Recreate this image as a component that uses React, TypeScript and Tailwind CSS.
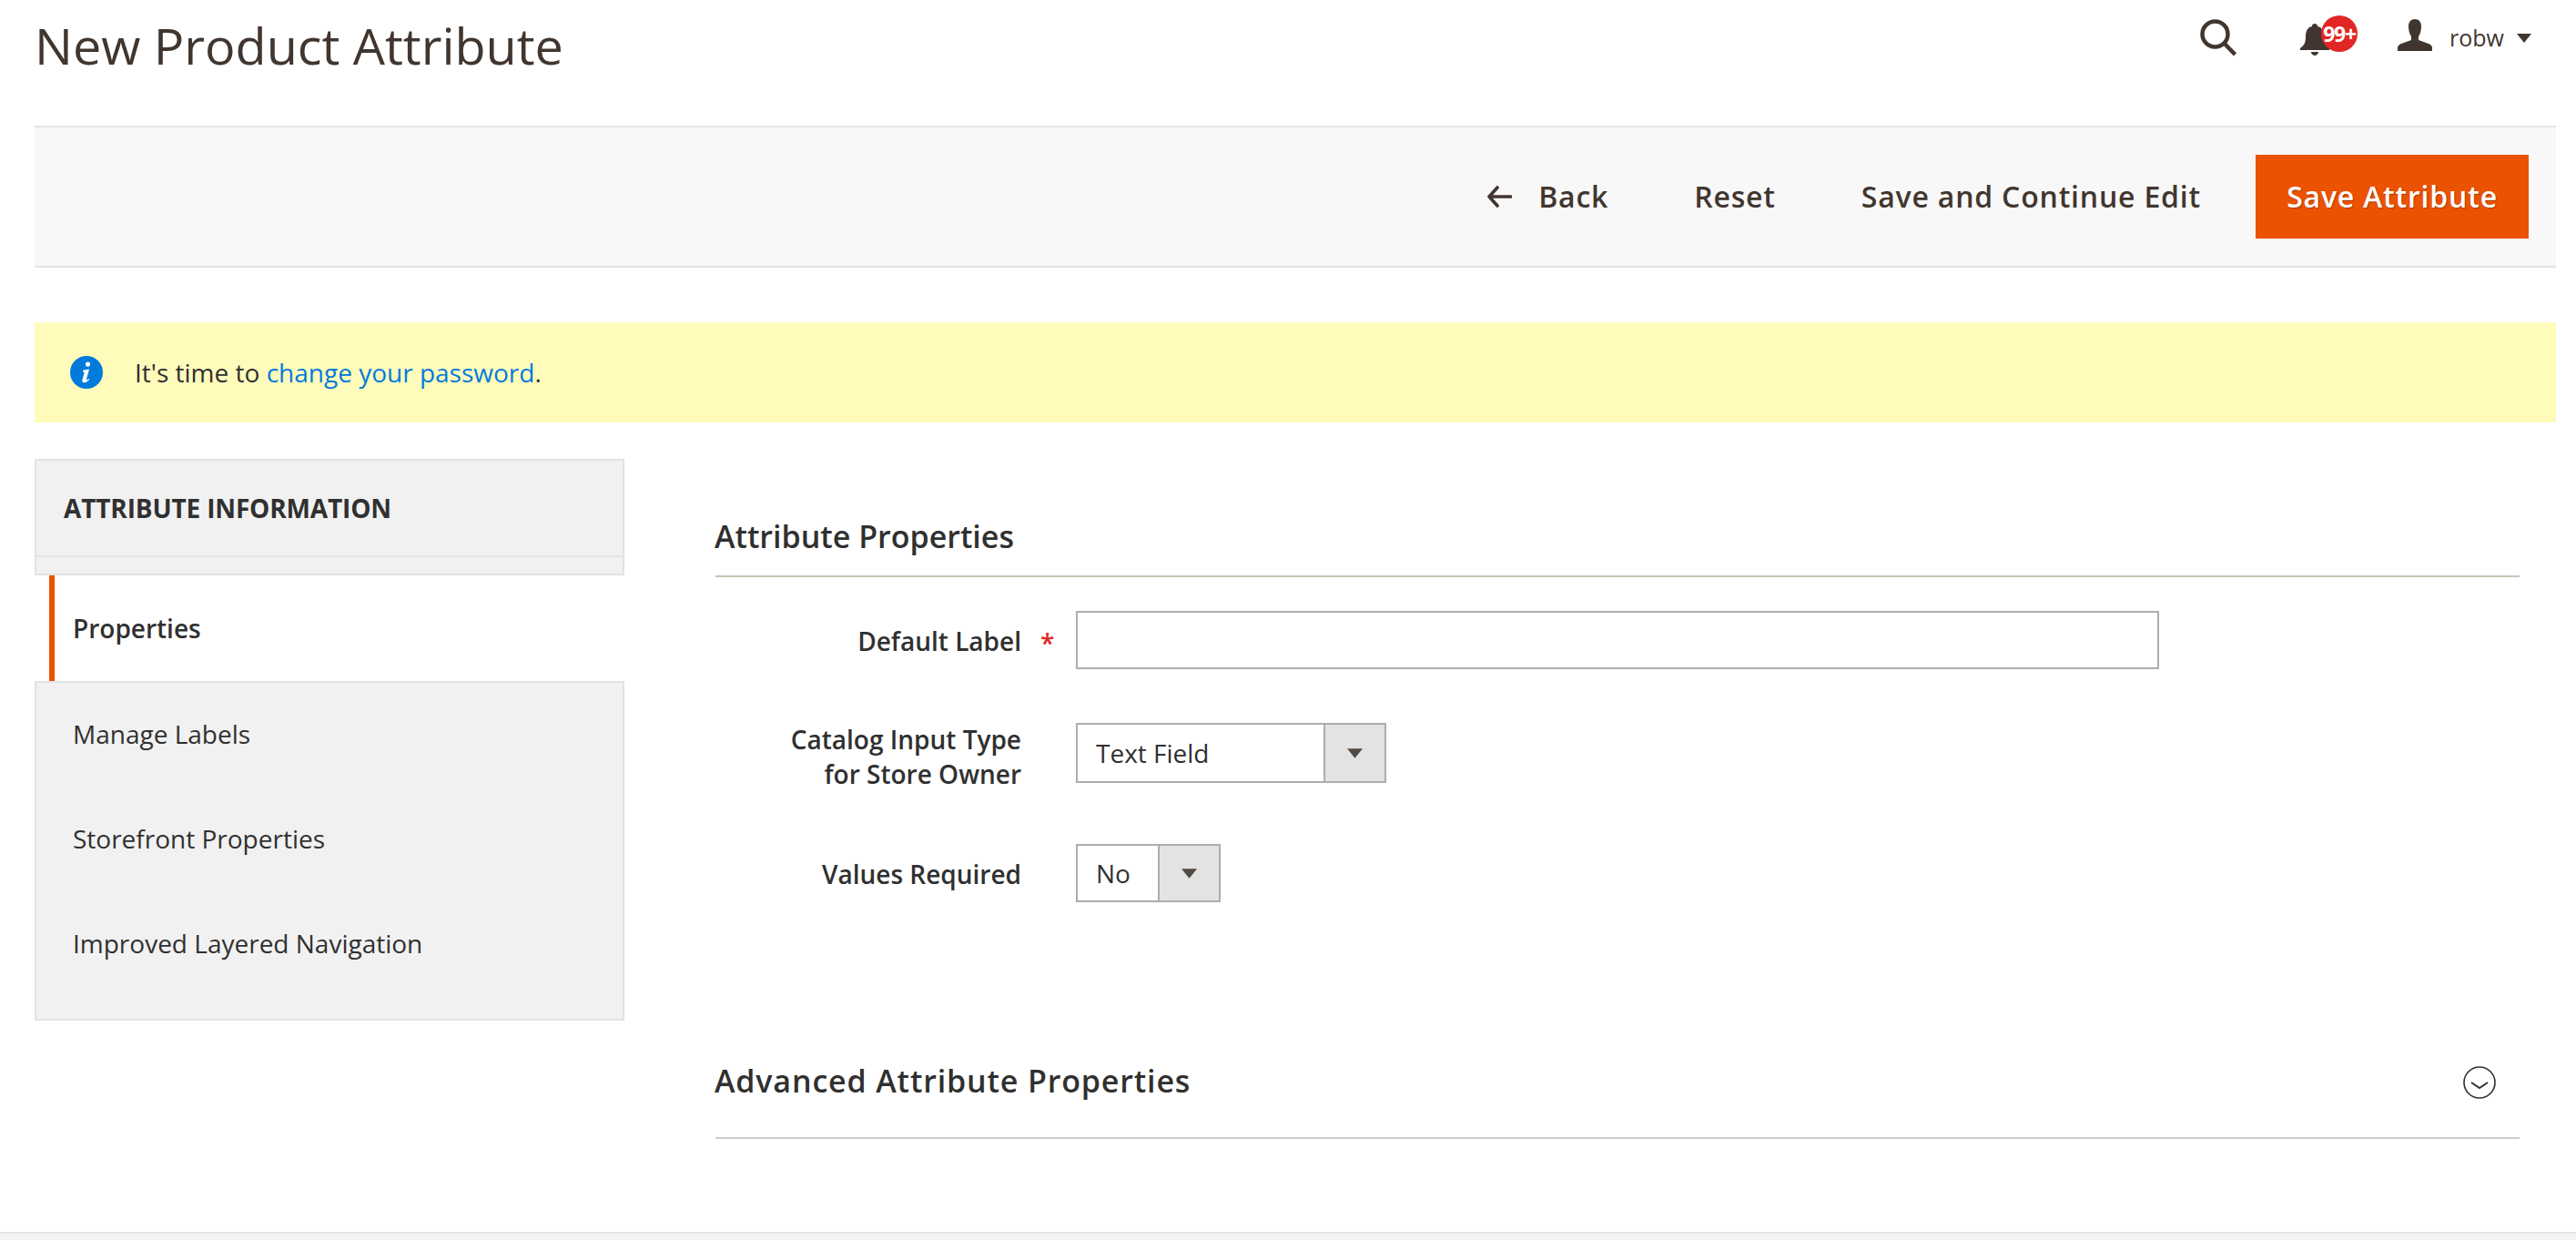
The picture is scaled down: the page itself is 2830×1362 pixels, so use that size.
import React from "react";

function Caret({ className }: { className: string }) {
  return (
    <svg viewBox="0 0 16 10" className={className} fill="currentColor">
      <path d="M0 0H16L8 10Z" />
    </svg>
  );
}

function SelectBox({ value, textW, h }: { value: string; textW: string; h: string }) {
  return (
    <div className={`flex ${h} border-2 border-[#adadad] bg-white`}>
      <div className={`${textW} pl-[20px] flex items-center text-[28px] text-[#303030]`}>{value}</div>
      <div className="w-[67px] bg-[#e3e3e3] border-l-2 border-[#adadad] flex items-center justify-center text-[#514943]">
        <Caret className="w-[17px] h-[15px]" />
      </div>
    </div>
  );
}

export default function App() {
  return (
    <div className="h-[1362px] w-full overflow-hidden bg-white flex flex-col font-['Open_Sans',sans-serif] text-[#303030]">
      <div className="flex-1 px-[38px] pr-[22px]">
        {/* Header */}
        <header className="h-[138px] flex justify-between items-start">
          <h1 className="text-[55.7px] font-normal leading-[76px] text-[#41362f] mt-[11px]">New Product Attribute</h1>
          <div className="flex items-start text-[#41362f] pr-[27px]">
            <svg viewBox="0 0 40 41" className="w-[40px] h-[41px] mt-[21px] mr-[70px]">
              <circle cx="16.5" cy="16.5" r="14" fill="none" stroke="#41362f" strokeWidth="4.5" />
              <path d="M26 26L38.5 39" stroke="#41362f" strokeWidth="4.5" />
            </svg>
            <div className="relative w-[62px] h-[60px] mr-[45px]">
              <svg viewBox="0 0 32 36" className="absolute left-0 top-[26px] w-[32px] h-[36px]">
                <path d="M16 0c2 0 3 1 3 3 6 1 7 7 7 12 0 6 2 9 6 12v2H0v-2c4-3 6-6 6-12 0-5 1-11 7-12 0-2 1-3 3-3z" fill="#41362f" />
                <path d="M12 31h8c0 2-2 4-4 4s-4-2-4-4z" fill="#41362f" />
              </svg>
              <span className="absolute left-[23px] top-[17px] w-[40px] h-[40px] rounded-full bg-[#e22626] text-white text-[23px] font-bold tracking-[-1.2px] flex items-center justify-center">99+</span>
            </div>
            <svg viewBox="0 0 38 35" className="w-[38px] h-[35px] mt-[21px] mr-[19px]">
              <path d="M19 0c4.500 0 7 3 7 8 0 5-1.500 9-3 11v4l11 4c2.500 1 4 2.500 4 4.500V35H0v-3.500C0 29.500 1.500 28 4 27l11-4v-4c-1.500-2-3-6-3-11 0-5 2.500-8 7-8z" fill="#41362f" />
            </svg>
            <span className="text-[25px] leading-[38px] mt-[22px] mr-[14px]">robw</span>
            <Caret className="w-[16px] h-[10px] mt-[37px]" />
          </div>
        </header>

        {/* Action bar */}
        <div className="h-[156px] bg-[#f8f8f8] border-y-2 border-[#e3e3e3] flex items-center justify-end pr-[30px] pb-[1px] text-[#41362f] text-[32px] font-semibold tracking-[0.8px]">
          <svg viewBox="0 0 28 24" className="w-[28px] h-[24px] mr-[29px]">
            <path d="M12 2L3 12L12 22M3 12H27" fill="none" stroke="#41362f" strokeWidth="3.6" strokeLinecap="round" strokeLinejoin="round" />
          </svg>
          <span>Back</span>
          <span className="ml-[94px]">Reset</span>
          <span className="ml-[94px]">Save and Continue Edit</span>
          <button className="ml-[60px] w-[300px] h-[92px] bg-[#eb5202] text-white [text-shadow:1px_1px_1px_rgba(0,0,0,0.3)] font-semibold">Save Attribute</button>
        </div>

        {/* Notice */}
        <div className="mt-[60px] h-[110px] bg-[#fffbbb] flex items-center pl-[39px] text-[28px]">
          <svg viewBox="0 0 36 36" className="w-[36px] h-[36px] mr-[35px]">
            <circle cx="18" cy="18" r="18" fill="#007bdb" />
            <path d="M19.5 6.5a2.6 2.6 0 1 1 0 5.2 2.6 2.6 0 0 1 0-5.2zM14.5 15.5l6.5-1-3 11c-.2 1 .6 1.1 2.6-.6l.8.9c-2.4 2.6-4.5 3.7-6.3 3.5-1.7-.2-2.1-1.4-1.6-3.1l2.2-8.3-1.7-.3z" fill="#fff" />
          </svg>
          <span>It's time to <a className="text-[#007bdb]">change your password</a>.</span>
        </div>

        {/* Content */}
        <div className="mt-[40px] flex items-start">
          <aside className="w-[648px] shrink-0 text-[28px]">
            <div className="h-[108px] bg-[#f1f1f1] border-2 border-[#e3e3e3] flex items-center pl-[30px] font-bold uppercase text-[28px] tracking-[-0.15px]">Attribute Information</div>
            <div className="h-[20px] bg-[#f1f1f1] border-x-2 border-b-2 border-[#e3e3e3]" />
            <div className="h-[116px] ml-[16px] bg-white border-l-[6px] border-[#eb5202] flex items-center pl-[20px] font-semibold">Properties</div>
            <div className="bg-[#f1f1f1] border-2 border-[#e3e3e3] pb-[26px]">
              <div className="h-[115px] -mt-[2px] flex items-center pl-[40px]">Manage Labels</div>
              <div className="h-[115px] flex items-center pl-[40px]">Storefront Properties</div>
              <div className="h-[115px] flex items-center pl-[40px]">Improved Layered Navigation</div>
            </div>
          </aside>

          <main className="ml-[100px] flex-1 mr-[40px]">
            <div className="h-[130px] border-b-2 border-[#cac3b4] flex items-center pt-[42px] text-[#303030]">
              <h2 className="text-[34px] font-semibold -ml-[1px]">Attribute Properties</h2>
            </div>
            <div className="mt-[37px] flex items-center h-[64px]">
              <label className="relative w-[336px] text-right font-semibold text-[28px] pt-[2px]">
                Default Label
                <span className="absolute left-[357px] top-[4px] text-[#e22626]">*</span>
              </label>
              <input className="ml-[60px] w-[1190px] h-[64px] border-2 border-[#adadad] bg-white" />
            </div>
            <div className="mt-[59px] flex items-center h-[66px]">
              <label className="w-[336px] text-right font-semibold text-[28px] leading-[38px] pt-[8px]">
                Catalog Input Type<br />for Store Owner
              </label>
              <div className="ml-[60px]">
                <SelectBox value="Text Field" textW="w-[270px]" h="h-[66px]" />
              </div>
            </div>
            <div className="mt-[67px] flex items-center h-[64px]">
              <label className="w-[336px] text-right font-semibold text-[28px] pt-[2px]">Values Required</label>
              <div className="ml-[60px]">
                <SelectBox value="No" textW="w-[88px]" h="h-[64px]" />
              </div>
            </div>
            <div className="mt-[160px] h-[100px] border-b-2 border-[#cccccc] flex items-center justify-between pb-[26px]">
              <h2 className="text-[34px] font-semibold tracking-[0.85px] -ml-[1px]">Advanced Attribute Properties</h2>
              <svg viewBox="0 0 36 36" className="w-[36px] h-[36px] mr-[26px] mt-[4px]">
                <circle cx="18" cy="18" r="17" fill="none" stroke="#303030" strokeWidth="1.6" />
                <path d="M9 18l9 6 9-6" fill="none" stroke="#303030" strokeWidth="2" />
              </svg>
            </div>
          </main>
        </div>
      </div>
      <footer className="h-[9px] bg-[#f4f4f4] border-t-2 border-[#e3e3e3]" />
    </div>
  );
}
